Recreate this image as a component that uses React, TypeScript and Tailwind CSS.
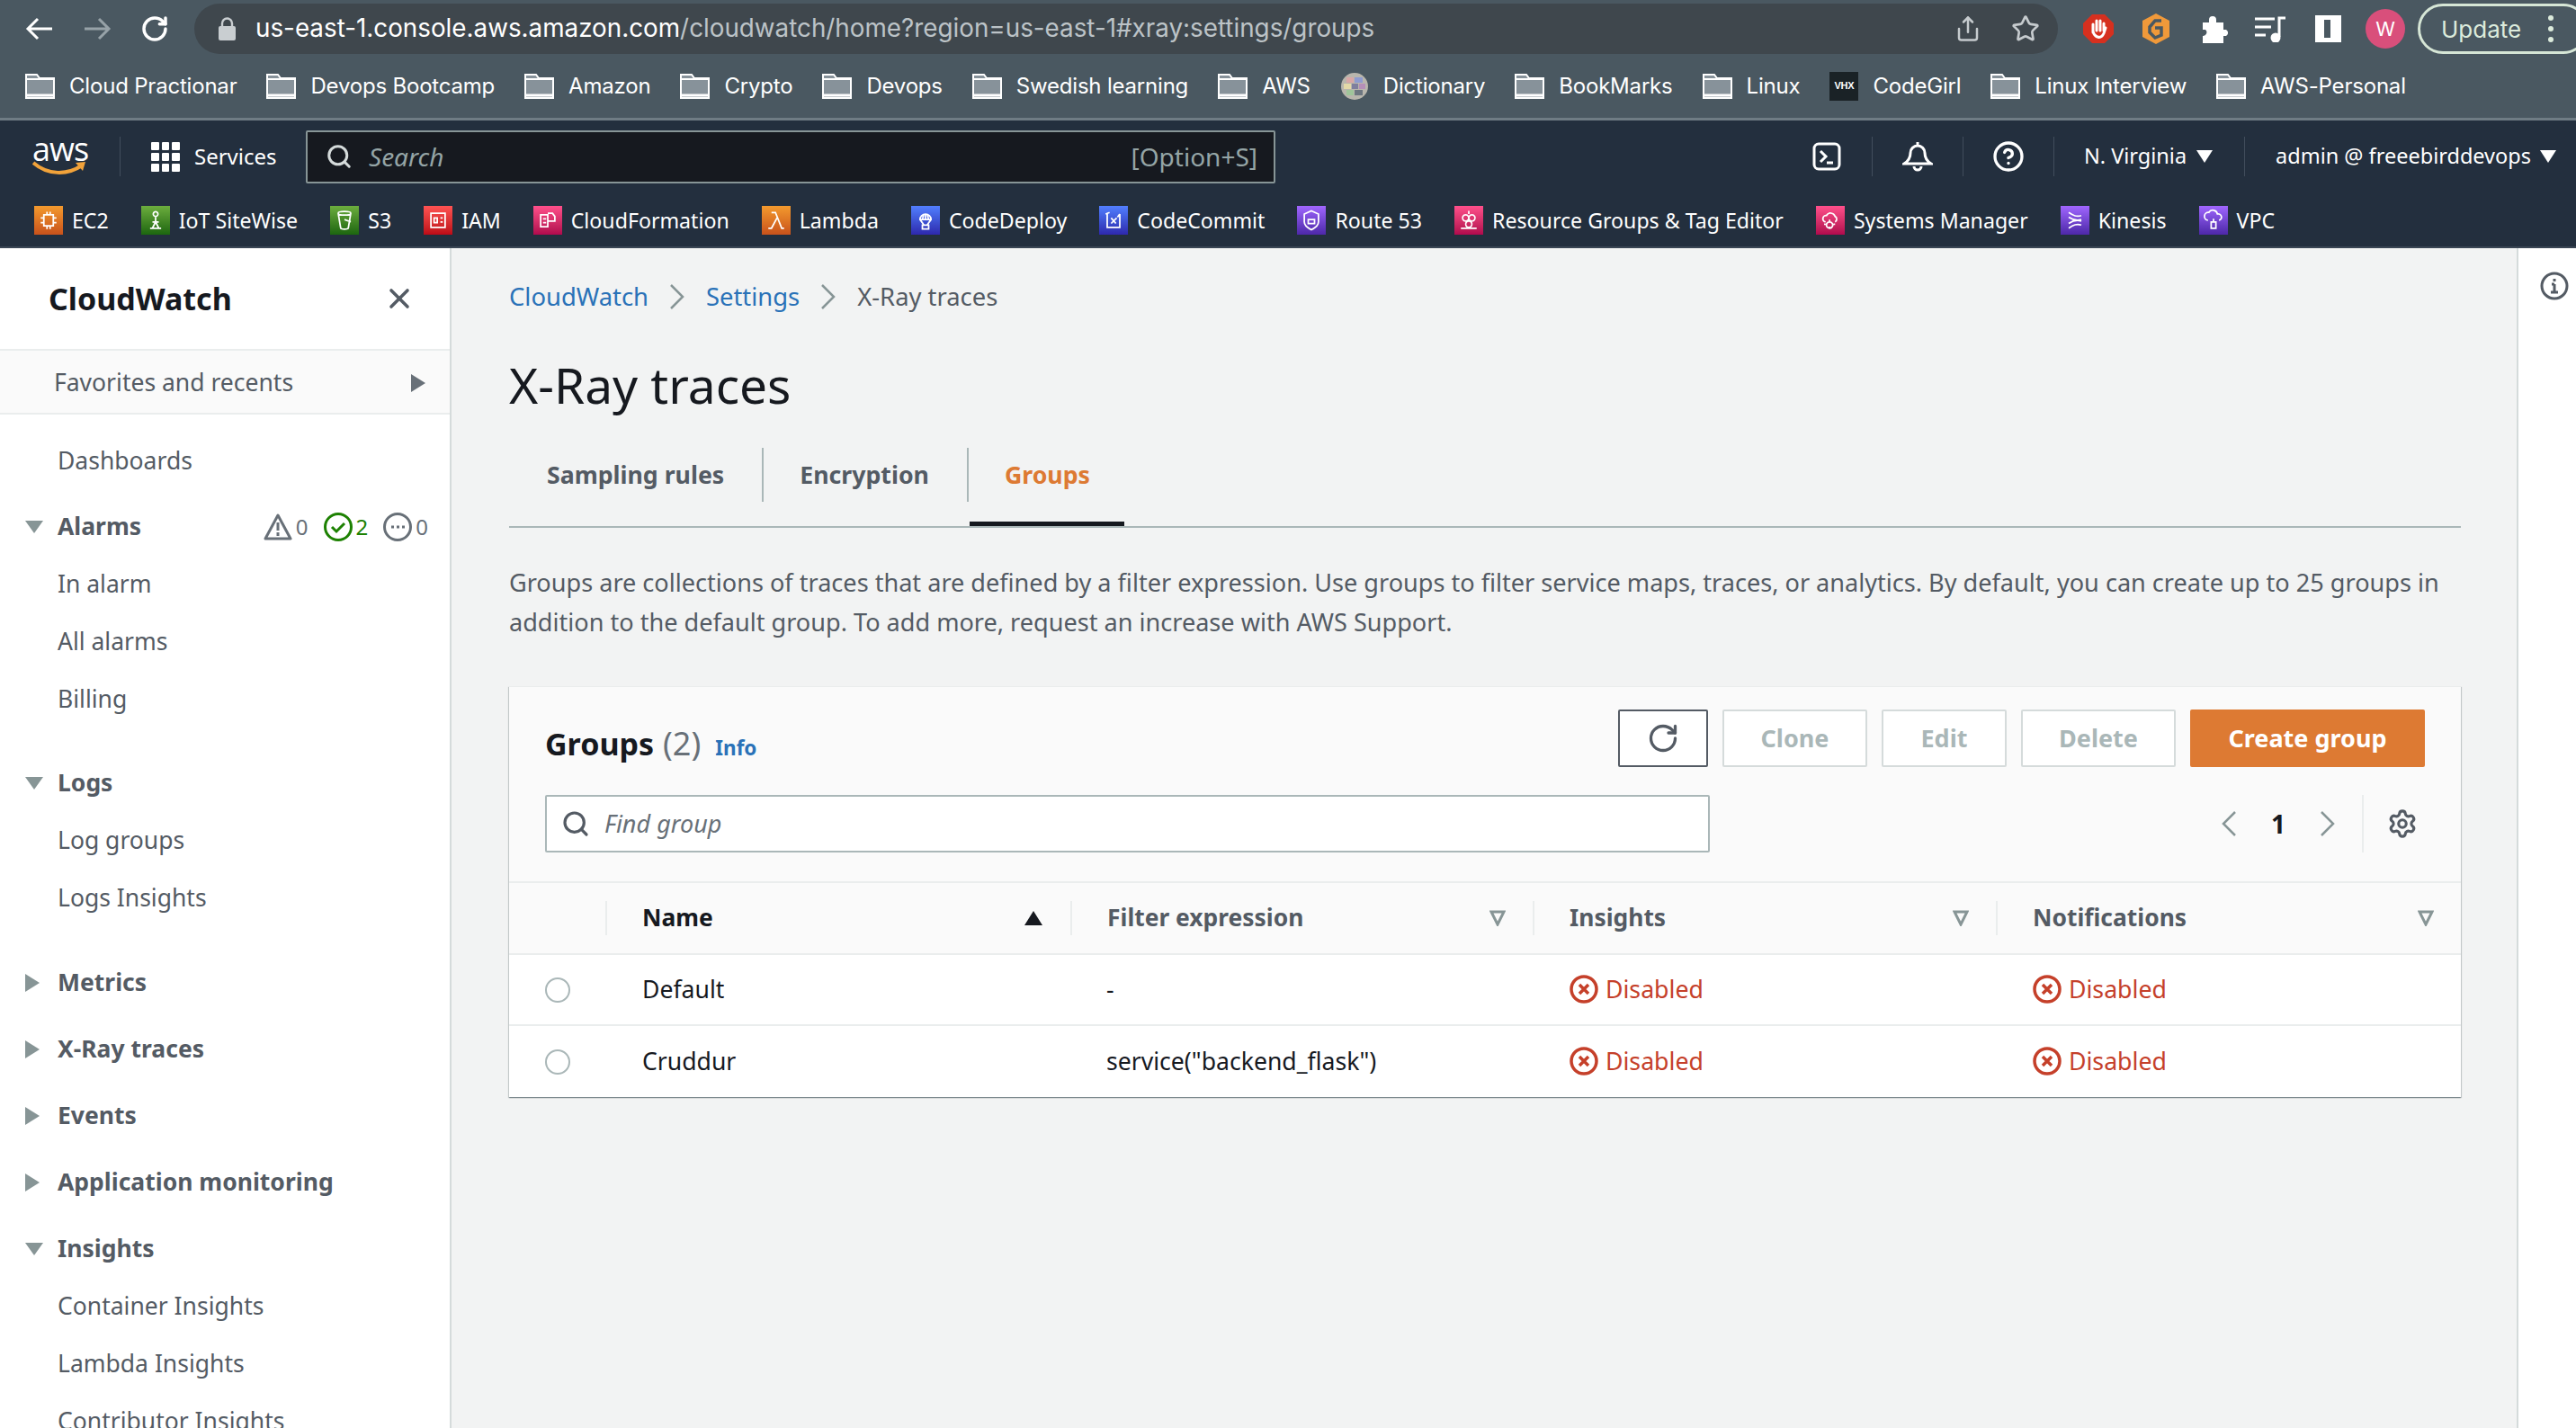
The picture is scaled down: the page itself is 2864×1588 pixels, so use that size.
import { CircleHelp, RotateCw, Search, Settings, Share, Star, X } from 'lucide-react'
import type { ReactNode } from 'react'

const ui = "font-['Noto_Sans',sans-serif]"
const mac = "font-['Inter',sans-serif]"

const Folder = () => (
  <svg width="33" height="28" viewBox="0 0 33 28" className="shrink-0">
    <path d="M1 27V1h12l3 4h16v22z" fill="#87929a" stroke="#fff" strokeWidth="2" />
    <path d="M1 6h31" stroke="#fff" strokeWidth="2" />
    <path d="M1 24h31" stroke="#fff" strokeWidth="3" />
  </svg>
)

const DictIcon = () => (
  <svg width="32" height="32" viewBox="0 0 32 32" className="shrink-0">
    <circle cx="16" cy="16" r="15" fill="#b9b6ad" />
    <rect x="7" y="6" width="8" height="6" fill="#d9a7a7" />
    <rect x="16" y="6" width="9" height="6" fill="#8f9bd0" />
    <rect x="4" y="13" width="8" height="6" fill="#e3d9a8" />
    <rect x="13" y="13" width="7" height="6" fill="#7f7f9e" />
    <rect x="21" y="13" width="7" height="6" fill="#b58fb8" />
    <rect x="7" y="20" width="8" height="6" fill="#9fc59a" />
    <rect x="16" y="20" width="9" height="6" fill="#6d7680" />
  </svg>
)

const VhxIcon = () => (
  <span className="w-[32px] h-[32px] shrink-0 bg-[#1a2226] flex items-center justify-center text-white text-[11px] font-bold leading-none font-['Liberation_Sans',sans-serif]">
    VHX
  </span>
)

const bookmarks: { label: string; icon?: ReactNode }[] = [
  { label: 'Cloud Practionar' },
  { label: 'Devops Bootcamp' },
  { label: 'Amazon' },
  { label: 'Crypto' },
  { label: 'Devops' },
  { label: 'Swedish learning' },
  { label: 'AWS' },
  { label: 'Dictionary', icon: <DictIcon /> },
  { label: 'BookMarks' },
  { label: 'Linux' },
  { label: 'CodeGirl', icon: <VhxIcon /> },
  { label: 'Linux Interview' },
  { label: 'AWS-Personal' },
]

const BrowserBar = () => (
  <div className={`bg-[#4a5861] border-b-[3px] border-[#6f7c84] h-[134px] ${mac}`}>
    <div className="h-[74px] flex items-center pb-[10px]">
      <div className="flex items-center pl-[28px] w-[216px] shrink-0 gap-[32px] text-white">
        <svg width="32" height="32" viewBox="0 0 32 32" fill="none" stroke="currentColor" strokeWidth="3"><path d="M30 16H4M14 5 3 16l11 11" /></svg>
        <svg width="32" height="32" viewBox="0 0 32 32" fill="none" stroke="#97a2a8" strokeWidth="3"><path d="M2 16h26M18 5l11 11-11 11" /></svg>
        <RotateCw size={32} strokeWidth={2.6} />
      </div>
      <div className="w-[2072px] h-[56px] shrink-0 rounded-full bg-[#3f474d] flex items-center pl-[27px] pr-[20px]">
        <svg width="19" height="26" viewBox="0 0 19 26" className="shrink-0 mr-[22px]">
          <path d="M4 11V7a5.5 5.5 0 0 1 11 0v4" fill="none" stroke="#c9ced1" strokeWidth="2.4" />
          <rect x="0" y="10" width="19" height="16" rx="2" fill="#c9ced1" />
        </svg>
        <span className="text-[27.8px] text-white whitespace-nowrap">us-east-1.console.aws.amazon.com<span className="text-[#bcc3c7]">/cloudwatch/home?region=us-east-1#xray:settings/groups</span></span>
        <span className="ml-auto flex items-center gap-[33px] text-[#c6cbce]">
          <Share size={30} strokeWidth={2} />
          <Star size={32} strokeWidth={2} />
        </span>
      </div>
      <div className="flex items-center pl-[28px]">
        <svg width="34" height="32" viewBox="0 0 34 32" className="shrink-0">
          <path d="M10 0h14l10 10v12L24 32H10L0 22V10z" fill="#d6301f" />
          <path d="M11 20v-9M15 18V7M19 18V7M23 18V10M11 19c2 7 9 9 12 2l2-6" fill="none" stroke="#fff" strokeWidth="3" strokeLinecap="round" />
        </svg>
        <svg width="30" height="34" viewBox="0 0 30 34" className="shrink-0 ml-[32px]">
          <path d="M15 0l15 8v18l-15 8L0 26V8z" fill="#f0993a" />
          <path d="M21 8h-7l-6 7v6l6 6 7-3v-8h-7" fill="none" stroke="#4a5861" strokeWidth="3.5" />
        </svg>
        <svg width="32" height="32" viewBox="0 0 32 32" className="shrink-0 ml-[33px]">
          <path d="M4 9h7V6a4 4 0 0 1 8 0v3h8v8h3a4 4 0 0 1 0 7h-3v8H4v-8a4 4 0 0 0 3-7H4z" fill="#fff" />
        </svg>
        <svg width="34" height="30" viewBox="0 0 34 30" className="shrink-0 ml-[30px]" fill="none" stroke="#fff" strokeWidth="3">
          <path d="M0 4h22M0 13h18M0 22h12M27 24V3h7" />
          <circle cx="23" cy="25" r="4" fill="#fff" />
        </svg>
        <span className="w-[29px] h-[30px] shrink-0 ml-[33px] border-[5px] border-white border-l-[10px] border-r-[12px] bg-[#4a5861]" />
        <span className="w-[44px] h-[44px] shrink-0 ml-[27px] rounded-full bg-[#d94f7b] text-white text-[22px] flex items-center justify-center">W</span>
        <span className="shrink-0 ml-[14px] w-[190px] h-[56px] rounded-full border-[3px] border-[#d6e6d6] flex items-center pl-[23px] gap-[30px] text-[#dcebdc] text-[26px]">
          Update
          <span className="flex flex-col gap-[6px]">
            <span className="w-[6px] h-[6px] rounded-full bg-[#dcebdc]" />
            <span className="w-[6px] h-[6px] rounded-full bg-[#dcebdc]" />
            <span className="w-[6px] h-[6px] rounded-full bg-[#dcebdc]" />
          </span>
        </span>
      </div>
    </div>
    <div className="h-[57px] flex items-center pl-[28px] gap-[33px] pb-[14px]">
      {bookmarks.map(b => (
        <div key={b.label} className="flex items-center gap-[16px] text-white text-[24px] whitespace-nowrap tracking-[-0.2px]">
          {b.icon ?? <Folder />}
          {b.label}
        </div>
      ))}
    </div>
  </div>
)

const svcIcon = {
  orange: 'from-[#c8511b] to-[#f39a2e]',
  green: 'from-[#1b660f] to-[#6cae3e]',
  red: 'from-[#bd0816] to-[#ff5252]',
  pink: 'from-[#b0084d] to-[#ff4f8b]',
  blue: 'from-[#2e27ad] to-[#527fff]',
  purple: 'from-[#4d27a8] to-[#a166ff]',
}

const glyphs: Record<string, ReactNode> = {
  EC2: <path d="M10 9h12v14H10zM14 5v4M18 5v4M14 23v4M18 23v4M6 13h4M6 19h4M22 13h4M22 19h4" />,
  Iot: <path d="M16 5a3 3 0 1 0 .01 0M16 11v7M9 26h14M12 26l4-8 4 8M12 18h8" />,
  S3: <path d="M8 7c0-3 16-3 16 0s-16 3-16 0l3 18c0 3 10 3 10 0l3-18M16 15l8 3" />,
  IAM: <path d="M7 7h18v18H7zM11 13h4v6h-4zM19 13h3M19 18h3" />,
  CF: <path d="M7 9h9v15H7zM10 14h4M10 19h4M16 7h6l3 4v6h-9" />,
  Lambda: <path d="M10 6h5l8 20h3M17 13l-7 13H6" />,
  Deploy: <path d="M9 15a7 7 0 0 1 14 0zM16 8v7M12 15l2-7M20 15l-2-7M9 15l5 7M23 15l-5 7M12 22h8v5h-8z" />,
  Commit: <path d="M6 8l5-2M8 8v17h16V8M13 13l6 7M13 20l7-7M24 8l-3 4" />,
  Route: <path d="M16 4l9 4v10c0 5-5 8-9 10-4-2-9-5-9-10V8zM12 15h8v5h-8z" />,
  Res: <path d="M12 9a4 4 0 1 0 .01 0M20 9a4 4 0 1 0 .01 0M16 17a4 4 0 1 0 .01 0M16 4v4M6 26h20" />,
  Sys: <path d="M10 18a4 4 0 0 1 1-8 6 6 0 0 1 11 1 4 4 0 0 1 0 7M15 18a4 4 0 1 0 .01 0M15 15v3M15 24v3M10 21H8M22 21h-2" />,
  Kin: <path d="M8 6c6 4 10 6 16 4M8 12c6 4 10 5 16 3M8 26c6-4 10-6 16-4M8 20c6-4 10-5 16-3" />,
  Vpc: <path d="M9 16a5 5 0 0 1 1-10 6 6 0 0 1 11 2 4 4 0 0 1 2 8M13 18h6v8h-6zM16 14v4" />,
}

const services: { label: string; color: keyof typeof svcIcon; g: string }[] = [
  { label: 'EC2', color: 'orange', g: 'EC2' },
  { label: 'IoT SiteWise', color: 'green', g: 'Iot' },
  { label: 'S3', color: 'green', g: 'S3' },
  { label: 'IAM', color: 'red', g: 'IAM' },
  { label: 'CloudFormation', color: 'pink', g: 'CF' },
  { label: 'Lambda', color: 'orange', g: 'Lambda' },
  { label: 'CodeDeploy', color: 'blue', g: 'Deploy' },
  { label: 'CodeCommit', color: 'blue', g: 'Commit' },
  { label: 'Route 53', color: 'purple', g: 'Route' },
  { label: 'Resource Groups & Tag Editor', color: 'pink', g: 'Res' },
  { label: 'Systems Manager', color: 'pink', g: 'Sys' },
  { label: 'Kinesis', color: 'purple', g: 'Kin' },
  { label: 'VPC', color: 'purple', g: 'Vpc' },
]

const NavDivider = () => <span className="w-[1px] h-[44px] bg-[#414d5c] shrink-0" />

const Caret = () => (
  <svg width="18" height="14" viewBox="0 0 18 14" className="shrink-0"><path d="M0 0h18L9 14z" fill="#fff" /></svg>
)

const AwsNav = () => (
  <div className={`bg-[#232f3e] h-[142px] border-b-[2px] border-[#3a4654] ${ui}`}>
    <div className="h-[78px] flex items-center pt-[2px]">
      <div className="w-[133px] pl-[36px] shrink-0 flex flex-col items-start">
        <span className="text-white text-[36px] leading-[26px] tracking-[-1px] font-['Open_Sans',sans-serif] h-[26px]">aws</span>
        <svg width="60" height="16" viewBox="0 0 60 16">
          <path d="M1 2c16 14 38 14 54 3" fill="none" stroke="#f2a33a" strokeWidth="4" />
          <path d="M48 2l11-1-3 10z" fill="#f2a33a" />
        </svg>
      </div>
      <NavDivider />
      <div className="flex items-center w-[206px] pl-[34px] gap-[16px] text-white text-[24px]">
        <span className="grid grid-cols-3 gap-[3px] w-[32px] shrink-0">
          {Array.from({ length: 9 }).map((_, i) => (
            <span key={i} className="h-[9px] rounded-[1px] bg-white" />
          ))}
        </span>
        Services
      </div>
      <div className="w-[1078px] h-[59px] bg-[#16191f] border-[2px] border-[#879596] rounded-[2px] flex items-center pl-[20px] pr-[18px] text-[#95a5a6] text-[28px] shrink-0">
        <Search size={30} strokeWidth={2.4} className="text-[#d5dbdb] mr-[18px]" />
        <span className="italic">Search</span>
        <span className="ml-auto">[Option+S]</span>
      </div>
      <div className="flex items-center ml-auto text-white text-[23.5px] pr-[22px]">
        <svg width="32" height="32" viewBox="0 0 32 32" fill="none" stroke="#fff" strokeWidth="3" className="shrink-0 mr-[34px]">
          <rect x="2" y="2" width="28" height="28" rx="5" />
          <path d="M9 10l6 6-6 6M16 23h7" />
        </svg>
        <NavDivider />
        <svg width="34" height="34" viewBox="0 0 34 34" fill="none" stroke="#fff" strokeWidth="3" className="shrink-0 mx-[33px]">
          <path d="M2 25c5-3 7-6 7-12a8 8 0 0 1 16 0c0 6 2 9 7 12zM17 1v4M13 28a4 4 0 0 0 8 0" />
        </svg>
        <NavDivider />
        <CircleHelp size={36} strokeWidth={2.2} className="mx-[32px]" />
        <NavDivider />
        <span className="ml-[33px] mr-[11px] whitespace-nowrap">N. Virginia</span>
        <Caret />
        <span className="w-[35px]" />
        <NavDivider />
        <span className="ml-[34px] mr-[10px] whitespace-nowrap">admin @ freeebirddevops</span>
        <Caret />
      </div>
    </div>
    <div className="h-[62px] flex items-center pl-[38px] gap-[36px] pt-[4px]">
      {services.map(s => (
        <div key={s.label} className="flex items-center gap-[10px] text-white text-[23.15px] whitespace-nowrap">
          <span className={`w-[32px] h-[32px] shrink-0 bg-linear-to-t ${svcIcon[s.color]} flex items-center justify-center`}>
            <svg width="28" height="28" viewBox="0 0 32 32" fill="none" stroke="#fff" strokeWidth="2">{glyphs[s.g]}</svg>
          </span>
          {s.label}
        </div>
      ))}
    </div>
  </div>
)

const SideLink = ({ children, className = '' }: { children: ReactNode; className?: string }) => (
  <div className={`h-[64px] flex items-center pl-[64px] text-[26.5px] text-[#545b64] whitespace-nowrap ${className}`}>
    {children}
  </div>
)

const SideHead = ({ label, open, className = '', extra }: { label: string; open?: boolean; className?: string; extra?: ReactNode }) => (
  <div className={`h-[64px] flex items-center pl-[28px] pr-[24px] text-[26.5px] font-bold text-[#545b64] ${className}`}>
    <span className="w-[36px] shrink-0">
      {open ? (
        <svg width="20" height="14" viewBox="0 0 20 14"><path d="M0 0h20L10 14z" fill="#879596" /></svg>
      ) : (
        <svg width="16" height="20" viewBox="0 0 16 20"><path d="M0 0l16 10L0 20z" fill="#879596" /></svg>
      )}
    </span>
    {label}
    {extra}
  </div>
)

const AlarmCounts = () => (
  <div className="ml-auto flex items-center text-[24px] font-normal">
    <svg width="32" height="32" viewBox="0 0 32 32" className="mr-[4px]">
      <path d="M16 3l14 26H2z" fill="none" stroke="#687078" strokeWidth="3" strokeLinejoin="round" />
      <path d="M16 11v9M16 22v4" stroke="#687078" strokeWidth="3" />
    </svg>
    <span className="text-[#687078] mr-[17px]">0</span>
    <svg width="32" height="32" viewBox="0 0 32 32" className="mr-[4px]">
      <circle cx="16" cy="16" r="14.5" fill="none" stroke="#1d8102" strokeWidth="3" />
      <path d="M9 16l5 5 9-9" fill="none" stroke="#1d8102" strokeWidth="3" />
    </svg>
    <span className="text-[#1d8102] mr-[17px]">2</span>
    <svg width="32" height="32" viewBox="0 0 32 32" className="mr-[4px]">
      <circle cx="16" cy="16" r="14.5" fill="none" stroke="#687078" strokeWidth="3" />
      <path d="M9 16h3M15 16h3M21 16h3" stroke="#687078" strokeWidth="3" />
    </svg>
    <span className="text-[#687078]">0</span>
  </div>
)

const Sidebar = () => (
  <aside className={`w-[502px] shrink-0 bg-white border-r-[2px] border-[#d5dbdb] overflow-hidden ${ui}`}>
    <div className="h-[112px] flex items-center justify-between pl-[54px] pr-[38px]">
      <span className="text-[34px] font-bold text-[#16191f]">CloudWatch</span>
      <X size={36} strokeWidth={2.4} className="text-[#545b64]" />
    </div>
    <div className="h-[73px] bg-[#fafafa] border-y-[2px] border-[#eaeded] flex items-center justify-between pl-[60px] pr-[27px] pt-[2px] text-[26.5px] text-[#545b64]">
      Favorites and recents
      <svg width="16" height="20" viewBox="0 0 16 20"><path d="M0 0l16 10L0 20z" fill="#687078" /></svg>
    </div>
    <SideLink className="mt-[20px]">Dashboards</SideLink>
    <SideHead label="Alarms" open className="mt-[9px]" extra={<AlarmCounts />} />
    <SideLink>In alarm</SideLink>
    <SideLink>All alarms</SideLink>
    <SideLink>Billing</SideLink>
    <SideHead label="Logs" open className="mt-[29px]" />
    <SideLink>Log groups</SideLink>
    <SideLink>Logs Insights</SideLink>
    <SideHead label="Metrics" className="mt-[30px]" />
    <SideHead label="X-Ray traces" className="mt-[10px]" />
    <SideHead label="Events" className="mt-[10px]" />
    <SideHead label="Application monitoring" className="mt-[10px]" />
    <SideHead label="Insights" open className="mt-[10px]" />
    <SideLink>Container Insights</SideLink>
    <SideLink>Lambda Insights</SideLink>
    <SideLink>Contributor Insights</SideLink>
  </aside>
)

const Chevron = ({ dir, className = '' }: { dir: 'left' | 'right'; className?: string }) => (
  <svg width="18" height="30" viewBox="0 0 18 30" fill="none" stroke="#879596" strokeWidth="2.5" className={`shrink-0 ${className}`}>
    <path d={dir === 'left' ? 'M16 2 3 15l13 13' : 'M2 2l13 13L2 28'} />
  </svg>
)

const ActionBtn = ({ label, w }: { label: string; w: string }) => (
  <span className={`${w} h-[64px] border-[2px] border-[#d5dbdb] rounded-[2px] bg-white flex items-center justify-center text-[27px] font-bold text-[#aab7b8]`}>
    {label}
  </span>
)

const SortIcon = () => (
  <svg width="18" height="18" viewBox="0 0 18 18"><path d="M2 2h14l-7 14z" fill="none" stroke="#879596" strokeWidth="3" /></svg>
)

const HeadCell = ({ label, sorted }: { label: string; sorted?: boolean }) => (
  <div className="relative h-[78px] flex items-center justify-between pl-[41px] pr-[30px]">
    <span className="absolute left-0 top-[20px] w-[2px] h-[38px] bg-[#eaeded]" />
    <span className={`text-[26.4px] font-bold ${sorted ? 'text-[#16191f]' : 'text-[#545b64]'}`}>{label}</span>
    {sorted ? (
      <svg width="22" height="18" viewBox="0 0 22 18"><path d="M11 1l10 16H1z" fill="#16191f" /></svg>
    ) : (
      <SortIcon />
    )}
  </div>
)

const Disabled = () => (
  <div className="flex items-center gap-[8px] pl-[41px] text-[26.7px] text-[#c5402a]">
    <svg width="32" height="32" viewBox="0 0 32 32" fill="none" stroke="#c5402a" strokeWidth="3.5">
      <circle cx="16" cy="16" r="14" />
      <path d="M11 11l10 10M21 11L11 21" />
    </svg>
    Disabled
  </div>
)

const Radio = () => (
  <div className="pl-[40px]">
    <span className="block w-[28px] h-[28px] rounded-full border-[2px] border-[#aab7b8] bg-white" />
  </div>
)

const Row = ({ name, filter, last }: { name: string; filter: string; last?: boolean }) => (
  <div className={`grid grid-cols-[107px_517px_514px_515px_517px] h-[79px] items-center bg-white text-[26.6px] text-[#16191f] ${last ? '' : 'border-b-[2px] border-[#eaeded]'}`}>
    <Radio />
    <div className="pl-[41px]">{name}</div>
    <div className="pl-[40px]">{filter}</div>
    <Disabled />
    <Disabled />
  </div>
)

const GroupsCard = () => (
  <div className="mt-[49px] w-[2170px] bg-[#fafafa] shadow-[0_1px_1px_0_rgba(0,28,36,0.3),1px_1px_1px_0_rgba(0,28,36,0.15),-1px_1px_1px_0_rgba(0,28,36,0.15)] border-t-[1px] border-[#eaeded]">
    <div className="flex items-center justify-between h-[120px] pl-[40px] pr-[40px] pb-[6px]">
      <div className="flex items-baseline mt-[12px]">
        <span className="text-[34px] font-bold text-[#16191f]">Groups</span>
        <span className="text-[36px] text-[#687078] ml-[10px]">(2)</span>
        <span className="text-[22.5px] font-bold text-[#2a72b8] ml-[16px]">Info</span>
      </div>
      <div className="flex items-center gap-[16px]">
        <span className="w-[100px] h-[64px] border-[2px] border-[#545b64] rounded-[2px] bg-white flex items-center justify-center">
          <RotateCw size={36} strokeWidth={2.2} className="text-[#545b64]" />
        </span>
        <ActionBtn label="Clone" w="w-[161px]" />
        <ActionBtn label="Edit" w="w-[139px]" />
        <ActionBtn label="Delete" w="w-[172px]" />
        <span className="w-[261px] h-[64px] rounded-[2px] bg-[#dd7a33] flex items-center justify-center text-[27px] font-bold text-white">Create group</span>
      </div>
    </div>
    <div className="flex items-center pl-[40px] h-[64px]">
      <div className="w-[1295px] h-[64px] border-[2px] border-[#aab7b8] rounded-[2px] bg-white flex items-center pl-[16px] text-[27px] italic text-[#687078]">
        <Search size={32} strokeWidth={2.4} className="text-[#545b64] mr-[16px]" />
        Find group
      </div>
      <div className="flex-1 flex items-center justify-end pr-[48px] h-[64px]">
        <Chevron dir="left" />
        <span className="w-[92px] text-center text-[28px] font-bold text-[#16191f]">1</span>
        <Chevron dir="right" />
        <span className="w-[2px] h-[64px] bg-[#eaeded] ml-[29px] mr-[26px]" />
        <Settings size={34} strokeWidth={2.2} className="text-[#545b64]" />
      </div>
    </div>
    <div className="mt-[32px] border-t-[2px] border-[#eaeded]" />
    <div className="grid grid-cols-[107px_517px_514px_515px_517px] border-b-[2px] border-[#eaeded]">
      <div className="h-[78px]" />
      <HeadCell label="Name" sorted />
      <HeadCell label="Filter expression" />
      <HeadCell label="Insights" />
      <HeadCell label="Notifications" />
    </div>
    <Row name="Default" filter="-" />
    <Row name="Cruddur" filter={'service("backend_flask")'} last />
  </div>
)

const Tab = ({ label, active, first }: { label: string; active?: boolean; first?: boolean }) => (
  <div className={`relative h-[114px] flex items-center px-[42px] text-[26.7px] font-bold ${active ? 'text-[#dd7a33]' : 'text-[#545b64]'}`}>
    {!first && <span className="absolute left-0 top-[27px] w-[2px] h-[60px] bg-[#aab7b8]" />}
    {label}
    {active && <span className="absolute left-[3px] right-[4px] bottom-0 h-[5px] bg-[#16191f]" />}
  </div>
)

const Main = () => (
  <main className={`flex-1 bg-[#f2f3f3] pl-[64px] ${ui}`}>
    <div className="flex items-center h-[34px] mt-[37px] text-[27.4px]">
      <span className="text-[#2a72b8]">CloudWatch</span>
      <Chevron dir="right" className="mx-[23px]" />
      <span className="text-[#2a72b8]">Settings</span>
      <Chevron dir="right" className="mx-[23px]" />
      <span className="text-[#545b64]">X-Ray traces</span>
    </div>
    <h1 className="text-[55px] leading-[70px] mt-[46px] text-[#16191f]">X-Ray traces</h1>
    <div className="mt-[8px] w-[2170px] h-[116px] border-b-[2px] border-[#aab7b8] flex">
      <Tab label="Sampling rules" first />
      <Tab label="Encryption" />
      <Tab label="Groups" active />
    </div>
    <p className="mt-[39px] w-[2170px] text-[27.1px] leading-[44px] text-[#545b64]">
      Groups are collections of traces that are defined by a filter expression. Use groups to filter service maps, traces, or analytics. By default, you can create up to 25 groups in addition to the default group. To add more, request an increase with AWS Support.
    </p>
    <GroupsCard />
  </main>
)

export default function App() {
  return (
    <div className="w-[2864px] h-[1588px] overflow-hidden flex flex-col">
      <BrowserBar />
      <AwsNav />
      <div className="flex-1 flex min-h-0">
        <Sidebar />
        <Main />
        <aside className="w-[66px] shrink-0 bg-white border-l-[2px] border-[#d5dbdb] pt-[26px] pl-[24px]">
          <svg width="32" height="32" viewBox="0 0 32 32" fill="none" stroke="#545b64" strokeWidth="3">
            <circle cx="16" cy="16" r="14" />
            <path d="M16 14v9M12 23h8M16 8v3M13 14h3" />
          </svg>
        </aside>
      </div>
    </div>
  )
}
